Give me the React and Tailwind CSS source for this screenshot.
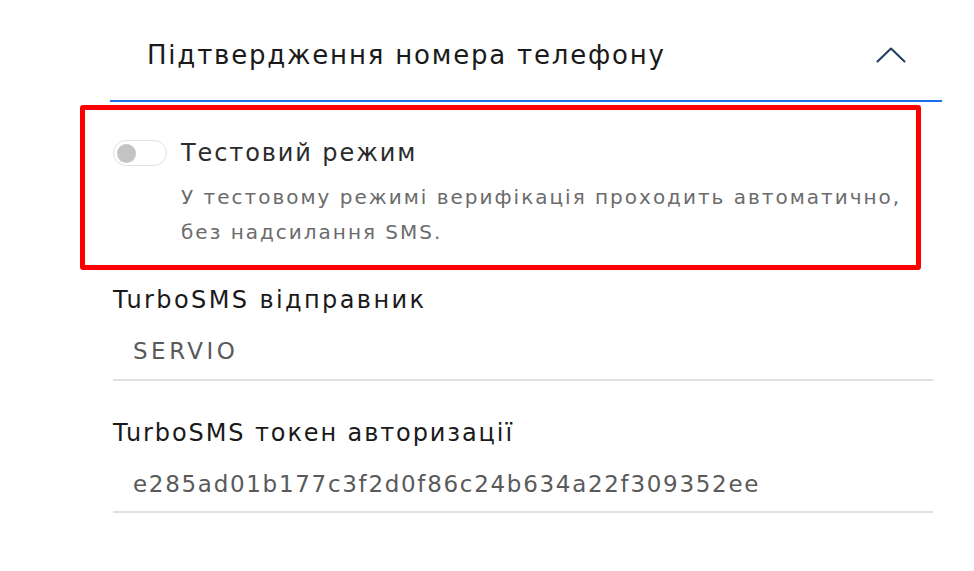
export default function App() {
  return (
    <div className="w-[974px] h-[571px] bg-white pl-[80px] font-['DejaVu_Sans',sans-serif] overflow-hidden">
      <div className="ml-[30px] w-[832px] h-[102px] border-b-2 border-[#1a6cf0] flex items-center justify-between pl-[37px] pr-[36px] pt-[10px]">
        <span className="text-[26px] tracking-[1.8px] text-[#1a1a1a]">Підтвердження номера телефону</span>
        <svg width="30" height="16" viewBox="0 0 30 16" fill="none">
          <path d="M1.5 14.5 L15 1.5 L28.5 14.5" stroke="#1f3b5c" strokeWidth="2" strokeLinecap="round" strokeLinejoin="round" />
        </svg>
      </div>

      <div className="mt-[3px] w-[841px] h-[165px] border-[5px] border-[#ff0000] rounded-[3px] pl-[28px] pt-[28px]">
        <div className="flex items-center gap-[14px]">
          <div className="w-[54px] h-[26px] rounded-full border border-[#e2e2e2] bg-white flex items-center pl-[3px]">
            <div className="w-[19px] h-[19px] rounded-full bg-[#c4c4c4]" />
          </div>
          <span className="text-[24px] leading-[30px] tracking-[1.9px] text-[#2b2b2b]">Тестовий режим</span>
        </div>
        <p className="ml-[68px] mt-[12px] text-[20px] leading-[35px] tracking-[2px] text-[#6b6b6b]">
          У тестовому режимі верифікація проходить автоматично,<br />без надсилання SMS.
        </p>
      </div>

      <div className="ml-[33px] w-[820px] mt-[14px]">
        <div className="text-[24px] leading-[32px] tracking-[2.4px] text-[#1a1a1a]">TurboSMS відправник</div>
        <div className="h-[65px] flex items-center pt-[7px] pl-[20px] text-[23px] tracking-[3.5px] text-[#5a5a5a] border-b-2 border-[#e0e0e0]">SERVIO</div>
        <div className="mt-[36px] text-[24px] leading-[32px] tracking-[1.9px] text-[#1a1a1a]">TurboSMS токен авторизації</div>
        <div className="h-[64px] flex items-center pt-[8px] pl-[20px] text-[23px] tracking-[1.7px] text-[#5a5a5a] border-b-2 border-[#e0e0e0]">e285ad01b177c3f2d0f86c24b634a22f309352ee</div>
      </div>
    </div>
  )
}
